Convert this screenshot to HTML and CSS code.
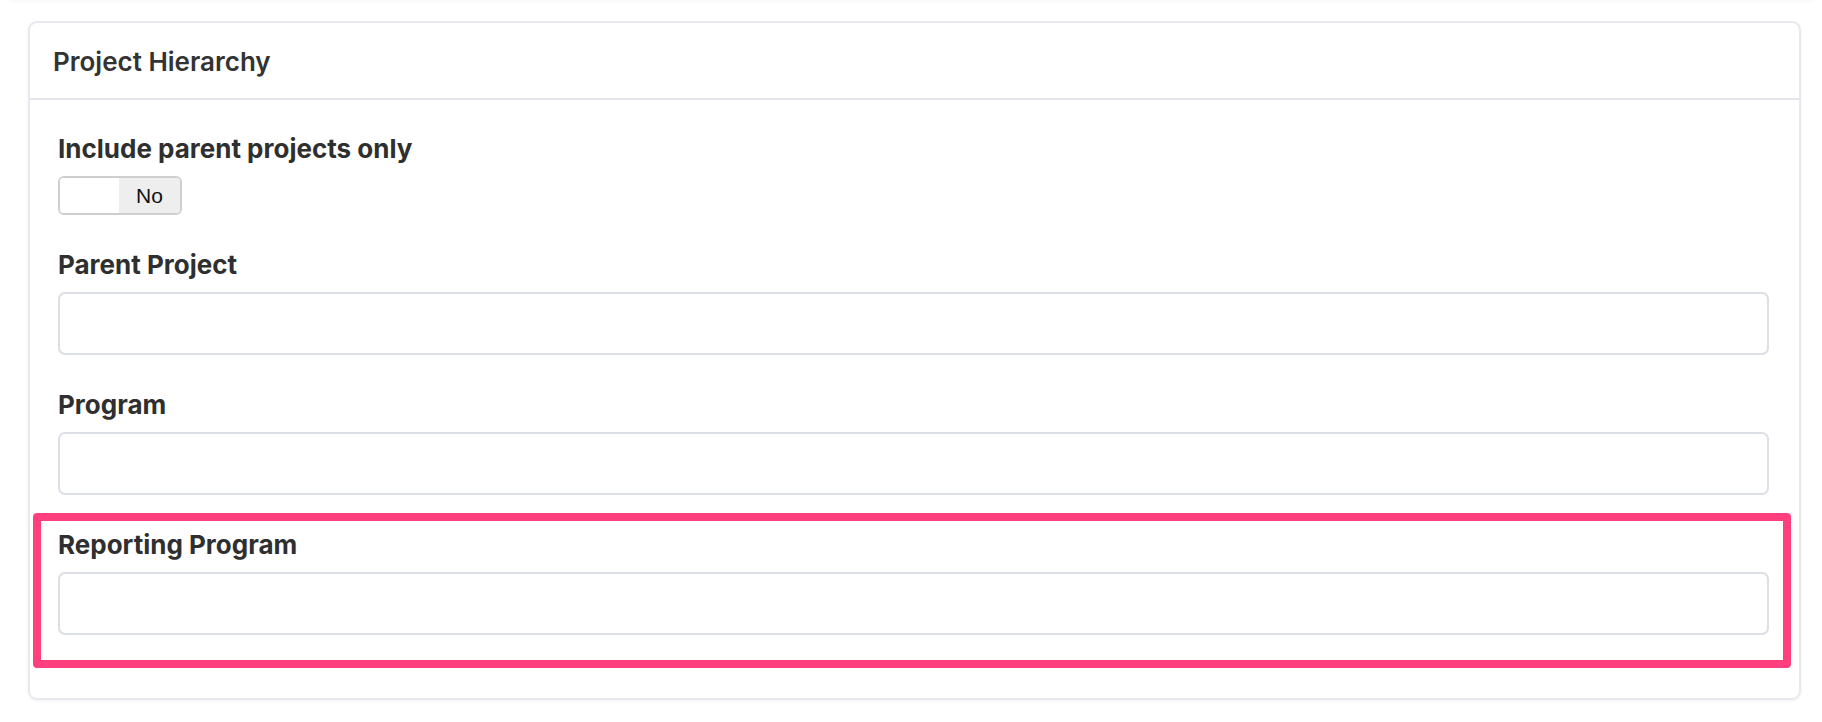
FILE: index.html
```html
<!DOCTYPE html>
<html lang="en">
<head>
  <meta charset="UTF-8" />
  <meta name="viewport" content="width=device-width, initial-scale=1.0"/>
  <title>Project Hierarchy</title>
  <link rel="stylesheet" href="styles.css">
</head>
<body>

<div class="prev-card"></div>

<div class="page">
  <div class="card">
    <div class="card-header">
      <h3>Project Hierarchy</h3>
    </div>

    <div class="card-body">
      <div class="field">
        <label>Include parent projects only</label>
        <div class="toggle">
          <span class="toggle-off"></span>
          <span class="toggle-label">No</span>
        </div>
      </div>

      <div class="field">
        <label for="parent_project">Parent Project</label>
        <input type="text" id="parent_project" />
      </div>

      <div class="field">
        <label for="program">Program</label>
        <input type="text" id="program" />
      </div>

      <div class="field highlight">
        <label for="reporting_program">Reporting Program</label>
        <input type="text" id="reporting_program" />
      </div>
    </div>
  </div>
</div>

</body>
</html>
```

FILE: styles.css
```css
body {
  margin: 0;
  font-family: Inter, "Noto Sans", sans-serif;
  background-color: #fff;
  color: #2f2f2f;
}
.prev-card {
  height: 2px;
  margin: -2px 10px 0;
  border-radius: 0 0 8px 8px;
  box-shadow: 0 1px 4px rgba(0,0,0,0.08);
}
.page {
  padding: 21px 21px 20px 28px;
}
.card {
  border: 2px solid #e8e9ee;
  border-radius: 9px;
  background: #fff;
  box-shadow: 0 1px 3px rgba(0,0,0,0.06);
}
.card-header {
  height: 75px;
  border-bottom: 2px solid #e4e5ea;
  display: flex;
  align-items: center;
  padding-left: 23px;
}
.card-header h3 {
  margin: 0;
  font-size: 26px;
  font-weight: 600;
  color: #333;
  padding-top: 2px;
}
.card-body {
  padding: 33px 30px 29px 28px;
}
.field {
  margin-bottom: 34px;
}
.field label {
  display: block;
  font-size: 26px;
  font-weight: 700;
  line-height: 31px;
  margin-bottom: 12px;
}
.field input {
  display: block;
  box-sizing: border-box;
  width: 100%;
  height: 63px;
  border: 2px solid #dcdfe5;
  border-radius: 7px;
  background: #fff;
}
.toggle {
  display: flex;
  width: 124px;
  height: 39px;
  box-sizing: border-box;
  border: 2px solid #cfcfcf;
  border-radius: 6px;
  overflow: hidden;
}
.field .toggle { margin-top: 5px; }
.toggle-off {
  flex: 1;
  background: #fff;
}
.toggle-label {
  width: 61px;
  background: #eee;
  font-family: "Liberation Sans", Arial, sans-serif;
  font-size: 21px;
  color: #111;
  display: flex;
  align-items: center;
  justify-content: center;
}
.highlight {
  position: relative;
}
.highlight::after {
  content: "";
  position: absolute;
  left: -25px;
  right: -22px;
  top: -16px;
  bottom: -33px;
  border: 8px solid #ff3f7e;
  border-radius: 4px;
  pointer-events: none;
}
```
